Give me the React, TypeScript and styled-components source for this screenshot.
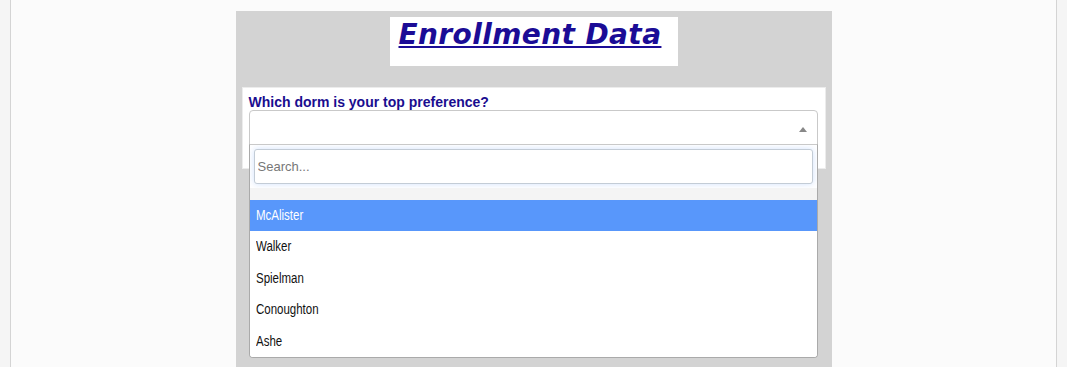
import React from 'react';
import styled, { createGlobalStyle } from 'styled-components';

const GlobalStyle = createGlobalStyle`
  html, body {
    margin: 0;
    padding: 0;
    height: 367px;
    overflow: hidden;
    background-color: #f5f5f5;
    font-family: 'Liberation Sans', Arial, sans-serif;
  }
`;

const Page = styled.div`
  display: flex;
  height: 367px;
`;
const Gutter = styled.div`
  width: 10px;
  flex: none;
  background-color: #f5f5f5;
`;
const Main = styled.main`
  flex: 1;
  display: flex;
  justify-content: center;
  padding-top: 11px;
  background-color: #fbfbfb;
  border-left: 1px solid #d4d4d4;
  border-right: 1px solid #d4d4d4;
`;
const Panel = styled.section`
  width: 596px;
  min-height: 420px;
  box-sizing: border-box;
  padding: 6px;
  background-color: #d3d3d3;
`;
const TitleBox = styled.div`
  width: 288px;
  height: 49px;
  box-sizing: border-box;
  margin: 0 auto;
  padding: 2px 0 0 9px;
  background-color: white;
`;
const Title = styled.h1`
  margin: 0;
  font-family: 'DejaVu Sans', Verdana, sans-serif;
  font-size: 28px;
  line-height: 32px;
  font-weight: bold;
  font-style: italic;
  letter-spacing: 0.4px;
  color: #1b0c96;
  text-decoration: underline;
  text-decoration-thickness: 2px;
  text-underline-offset: 2px;
  white-space: nowrap;
`;
const Card = styled.div`
  margin-top: 21px;
  padding: 6px 7px 23px 6px;
  background-color: white;
  border: 1px solid #ececec;
  box-sizing: border-box;
`;
const Label = styled.label`
  display: block;
  font-size: 14px;
  line-height: 16px;
  font-weight: bold;
  color: #1a0d8f;
`;
const SelectWrap = styled.div`
  position: relative;
`;
const Selection = styled.div`
  height: 35px;
  box-sizing: border-box;
  border: 1px solid #c9c9c9;
  border-radius: 4px 4px 0 0;
  background-color: white;
  display: flex;
  align-items: center;
  justify-content: flex-end;
  padding-right: 10px;
`;
const Arrow = styled.span`
  width: 0;
  height: 0;
  margin-top: 4px;
  border-style: solid;
  border-width: 0 4px 5px 4px;
  border-color: transparent transparent #888 transparent;
`;
const Dropdown = styled.div`
  position: absolute;
  top: 34px;
  left: 0;
  right: 0;
  box-sizing: border-box;
  background-color: white;
  border: 1px solid #aaa;
  border-top-color: #c9c9c9;
  border-radius: 0 0 4px 4px;
  overflow: hidden;
  z-index: 2;
`;
const SearchBox = styled.div`
  padding: 4px;
`;
const SearchInput = styled.input`
  display: block;
  width: 100%;
  height: 35px;
  box-sizing: border-box;
  padding: 0 3px;
  border: 1px solid #c3ccd6;
  border-radius: 3px;
  box-shadow: 0 0 6px rgba(88, 151, 251, 0.28);
  outline: none;
  font-family: 'Liberation Sans', Arial, sans-serif;
  font-size: 13px;
  color: #333;
  &::placeholder {
    color: #777;
  }
`;
const Blank = styled.div`
  height: 12px;
  background-color: #f4f4f4;
`;
const Option = styled.div<{ $active?: boolean }>`
  height: 31.4px;
  line-height: 31.4px;
  padding-left: 6px;
  font-size: 14px;
  color: ${(p) => (p.$active ? 'white' : '#111')};
  background-color: ${(p) => (p.$active ? '#5897fb' : 'white')};
`;
// the reference renders option text in a narrow face
const Narrow = styled.span`
  display: inline-block;
  transform: scaleX(0.82);
  transform-origin: left center;
`;

const dorms = ['McAlister', 'Walker', 'Spielman', 'Conoughton', 'Ashe'];

export default function App() {
  return (
    <Page>
      <GlobalStyle />
      <Gutter />
      <Main>
        <Panel>
          <TitleBox>
            <Title>Enrollment Data</Title>
          </TitleBox>
          <Card>
            <Label>Which dorm is your top preference?</Label>
            <SelectWrap>
              <Selection>
                <Arrow />
              </Selection>
              <Dropdown>
                <SearchBox>
                  <SearchInput placeholder='Search...' />
                </SearchBox>
                <Blank />
                {dorms.map((d, i) => (
                  <Option key={d} $active={i === 0}>
                    <Narrow>{d}</Narrow>
                  </Option>
                ))}
              </Dropdown>
            </SelectWrap>
          </Card>
        </Panel>
      </Main>
      <Gutter />
    </Page>
  );
}
